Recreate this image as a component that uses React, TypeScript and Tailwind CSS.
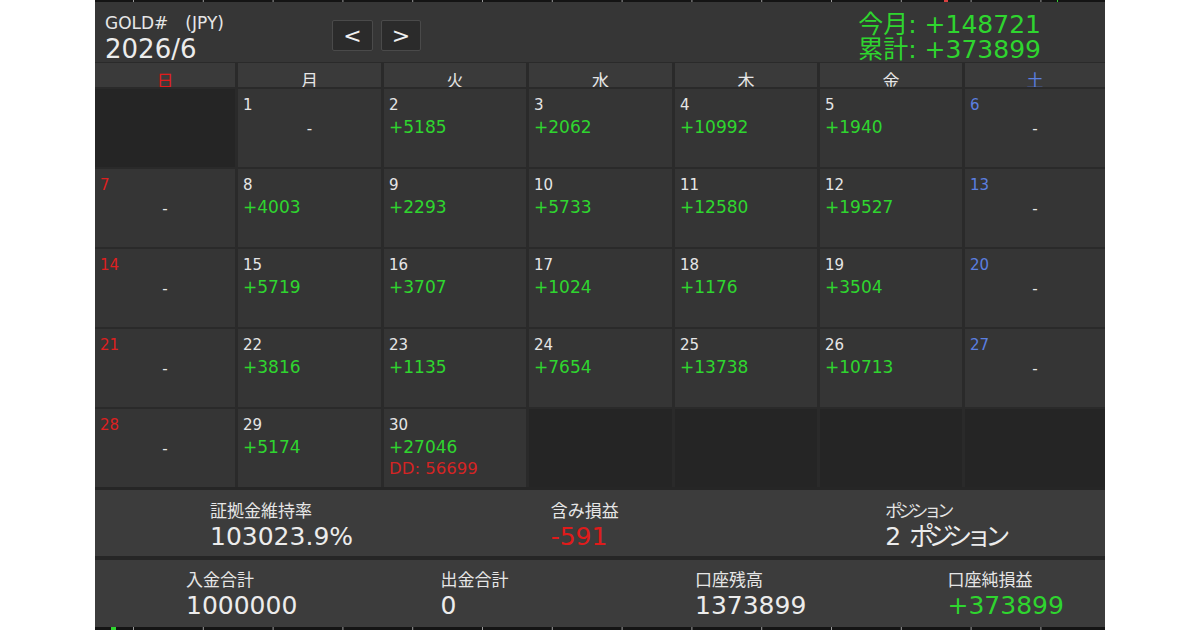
import React from "react";

type Day = { d?: number; v?: string; dd?: string };

const rows: Day[][] = [
  [{}, { d: 1, v: "-" }, { d: 2, v: "+5185" }, { d: 3, v: "+2062" }, { d: 4, v: "+10992" }, { d: 5, v: "+1940" }, { d: 6, v: "-" }],
  [{ d: 7, v: "-" }, { d: 8, v: "+4003" }, { d: 9, v: "+2293" }, { d: 10, v: "+5733" }, { d: 11, v: "+12580" }, { d: 12, v: "+19527" }, { d: 13, v: "-" }],
  [{ d: 14, v: "-" }, { d: 15, v: "+5719" }, { d: 16, v: "+3707" }, { d: 17, v: "+1024" }, { d: 18, v: "+1176" }, { d: 19, v: "+3504" }, { d: 20, v: "-" }],
  [{ d: 21, v: "-" }, { d: 22, v: "+3816" }, { d: 23, v: "+1135" }, { d: 24, v: "+7654" }, { d: 25, v: "+13738" }, { d: 26, v: "+10713" }, { d: 27, v: "-" }],
  [{ d: 28, v: "-" }, { d: 29, v: "+5174" }, { d: 30, v: "+27046", dd: "DD: 56699" }, {}, {}, {}, {}],
];

const weekdays = ["日", "月", "火", "水", "木", "金", "土"];

function Ticks({ bottom }: { bottom?: boolean }) {
  const xs: number[] = [];
  for (let i = 0; i < 14; i++) xs.push(38 + i * 69.8);
  const h = bottom ? 3 : 2;
  return (
    <svg width="1010" height={h} viewBox={`0 0 1010 ${h}`} className="block">
      <rect x="0" y="0" width="1010" height={h} fill="#141414" />
      {xs.map((x, i) => (
        <rect key={i} x={x} y="0" width="1" height={h} fill="#9a9a9a" />
      ))}
      {bottom ? <rect x="16" y="0" width="5" height={h} fill="#2fd52f" /> : <rect x="849" y="0" width="4" height={h} fill="#d84040" />}
      {bottom ? null : <rect x="962" y="0" width="1" height={h} fill="#2fd52f" />}
    </svg>
  );
}

function Cell({ day, col }: { day: Day; col: number }) {
  if (day.d === undefined) {
    return <div className="h-[78px] bg-[#252525]" />;
  }
  const numColor = col === 0 ? "text-[#dd2020]" : col === 6 ? "text-[#5b7fe0]" : "text-[#e6e6e6]";
  return (
    <div className="h-[78px] bg-[#353535] pl-[5px] pt-[6px] flex flex-col">
      <div className={`text-[15px] leading-[20px] ${numColor}`}>{day.d}</div>
      {day.v === "-" ? (
        <div className="text-[15px] leading-[20px] text-[#e6e6e6] text-center pr-[5px] mt-[4px]">-</div>
      ) : (
        <>
          <div className="text-[17px] leading-[21px] text-[#2fd52f] mt-[2px]">{day.v}</div>
          {day.dd && <div className="text-[16.5px] leading-[21px] text-[#d42424]">{day.dd}</div>}
        </>
      )}
    </div>
  );
}

export default function App() {
  return (
    <div className="w-full h-[630px] bg-white flex justify-center font-['DejaVu_Sans','Noto_Sans_CJK_JP',sans-serif]">
      <div className="w-[1010px] h-[630px] flex flex-col bg-[#2a2a2a]">
        <Ticks />
        <div className="h-[60px] bg-[#363636] flex items-start">
          <div className="w-[237px] pl-[10px] pt-[10px]">
            <div className="text-[17px] leading-[22px] text-[#e6e6e6]">GOLD#　(JPY)</div>
            <div className="text-[26px] leading-[30px] text-[#ececec]">2026/6</div>
          </div>
          <div className="flex gap-[8px] pt-[18px]">
            <button className="w-[41px] h-[31px] bg-[#2b2b2b] border border-[#4a4a4a] rounded-[2px] text-[#f0f0f0] text-[22px] leading-[26px] flex items-center justify-center">&lt;</button>
            <button className="w-[40px] h-[31px] bg-[#2b2b2b] border border-[#4a4a4a] rounded-[2px] text-[#f0f0f0] text-[22px] leading-[26px] flex items-center justify-center">&gt;</button>
          </div>
          <div className="ml-auto mr-[64px] pt-[10px] text-[25px] leading-[25px] text-[#2fd52f]">
            <div>今月: +148721</div>
            <div>累計: +373899</div>
          </div>
        </div>
        <div className="grid grid-cols-[140px_143px_142px_143px_142px_142px_1fr] gap-x-[3px] gap-y-[2px] pt-[1px]">
          {weekdays.map((w, i) => (
            <div
              key={w}
              className={`h-[24px] overflow-hidden bg-[#3a3a3a] text-center text-[17px] leading-[18px] pt-[9px] ${
                i === 0 ? "text-[#e01c1c]" : i === 6 ? "text-[#5b7fe0]" : "text-[#e6e6e6]"
              }`}
            >
              {w}
            </div>
          ))}
          {rows.map((r, ri) => r.map((d, ci) => <Cell key={`${ri}-${ci}`} day={d} col={ci} />))}
        </div>
        <div className="h-[3px] bg-[#262626]" />
        <div className="h-[66px] bg-[#3c3c3c] grid grid-cols-3 pt-[10px]">
          <div className="pl-[115px]">
            <div className="text-[17px] leading-[22px] text-[#e6e6e6]">証拠金維持率</div>
            <div className="text-[25px] leading-[30px] text-[#ececec]">103023.9%</div>
          </div>
          <div className="pl-[119px]">
            <div className="text-[17px] leading-[22px] text-[#e6e6e6]">含み損益</div>
            <div className="text-[25px] leading-[30px] text-[#e01b1b]">-591</div>
          </div>
          <div className="pl-[117px]">
            <div className="text-[17px] leading-[22px] text-[#e6e6e6] tracking-[-4px]">ポジション</div>
            <div className="text-[25px] leading-[30px] text-[#ececec]">
              2 <span className="tracking-[-6px]">ポジション</span>
            </div>
          </div>
        </div>
        <div className="h-[4px] bg-[#262626]" />
        <div className="h-[67px] bg-[#3c3c3c] grid grid-cols-4 pt-[9px]">
          <div className="pl-[91px]">
            <div className="text-[17px] leading-[22px] text-[#e6e6e6]">入金合計</div>
            <div className="text-[25px] leading-[30px] text-[#ececec]">1000000</div>
          </div>
          <div className="pl-[93px]">
            <div className="text-[17px] leading-[22px] text-[#e6e6e6]">出金合計</div>
            <div className="text-[25px] leading-[30px] text-[#ececec]">0</div>
          </div>
          <div className="pl-[95px]">
            <div className="text-[17px] leading-[22px] text-[#e6e6e6]">口座残高</div>
            <div className="text-[25px] leading-[30px] text-[#ececec]">1373899</div>
          </div>
          <div className="pl-[95px]">
            <div className="text-[17px] leading-[22px] text-[#e6e6e6]">口座純損益</div>
            <div className="text-[25px] leading-[30px] text-[#2fd52f]">+373899</div>
          </div>
        </div>
        <Ticks bottom />
      </div>
    </div>
  );
}
